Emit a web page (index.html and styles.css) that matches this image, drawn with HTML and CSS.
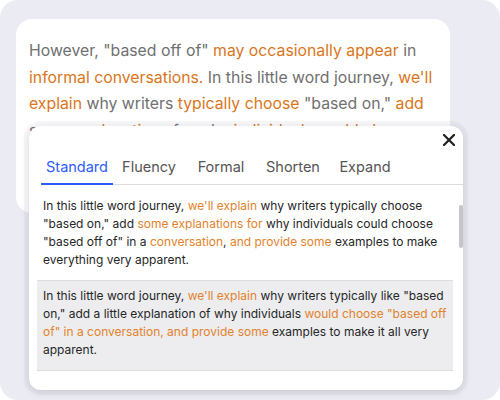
FILE: index.html
```html
<!DOCTYPE html>
<html lang="en">
<head>
    <meta charset="UTF-8">
    <meta name="viewport" content="width=device-width, initial-scale=1.0">
    <title>Rewrite suggestions</title>
    <link rel="stylesheet" href="styles.css">
</head>
<body>
    <div class="frame">
        <div class="editor-card">
            <p class="editor-text">
                However, "based off of" <span class="hl">may occasionally appear</span> in
                <span class="hl">informal conversations.</span> In this little word journey, <span class="hl">we'll
                explain</span> why writers <span class="hl">typically choose</span> "based on," <span class="hl">add</span>
                some <span class="hl">explanations</span> for why <span class="hl">individuals could choose</span>
            </p>
        </div>

        <div class="rewrite-popup">
            <div class="popup-head">
                <button class="close-btn" aria-label="Close">
                    <svg width="12" height="12" viewBox="0 0 12 12">
                        <path d="M1 1 L11 11 M11 1 L1 11" stroke="#1f1f1f" stroke-width="2.2" stroke-linecap="square"/>
                    </svg>
                </button>
            </div>

            <div class="tabs">
                <div class="tab active">Standard</div>
                <div class="tab">Fluency</div>
                <div class="tab">Formal</div>
                <div class="tab">Shorten</div>
                <div class="tab">Expand</div>
            </div>

            <div class="options">
                <div class="option">
                    In this little word journey, <span class="hl">we'll explain</span> why writers typically choose
                    "based on," add <span class="hl">some explanations for</span> why individuals could choose
                    "based off of" in a <span class="hl">conversation</span>, <span class="hl">and provide some</span> examples to make
                    everything very apparent.
                </div>
                <div class="option selected">
                    In this little word journey, <span class="hl">we'll explain</span> why writers typically like "based
                    on," add a little explanation of why individuals <span class="hl">would choose "based off
                    of" in a conversation, and provide some</span> examples to make it all very
                    apparent.
                </div>
            </div>

            <!-- scroll thumb of the options list -->
            <div class="scroll-thumb"></div>
        </div>
    </div>
</body>
</html>
```

FILE: styles.css
```css
body {
    margin: 0;
    background: #ffffff;
    font-family: 'Inter', 'Noto Sans', sans-serif;
}

.frame {
    position: relative;
    width: 500px;
    height: 400px;
    background: #ebebf3;
    border-radius: 18px;
    padding: 19px 0 0 16px;
    box-sizing: border-box;
}

.editor-card {
    width: 434px;
    height: 194px;
    background: #ffffff;
    border-radius: 16px;
    padding: 19px 12px 0 13px;
    box-sizing: border-box;
    overflow: hidden;
}

.editor-text {
    margin: 0;
    font-size: 15.8px;
    line-height: 26.5px;
    color: #707070;
}

.editor-text .hl {
    color: #d9761c;
}

.rewrite-popup {
    position: absolute;
    left: 29px;
    top: 126px;
    width: 434px;
    height: 264px;
    background: #ffffff;
    border-radius: 12px;
    box-shadow: 0 0 0 5px rgba(120, 120, 150, 0.05), 0 2px 10px rgba(0, 0, 0, 0.12);
}

.popup-head {
    display: flex;
    justify-content: flex-end;
    height: 24px;
    padding: 8px 8px 0 0;
    box-sizing: border-box;
}

.close-btn {
    border: none;
    background: none;
    padding: 0;
    width: 12px;
    height: 12px;
    cursor: pointer;
    display: flex;
}

.tabs {
    display: flex;
    margin-left: 12px;
    border-bottom: 1px solid #dcdcdf;
}

.tab {
    width: 72px;
    height: 33px;
    display: flex;
    align-items: center;
    justify-content: center;
    font-size: 14.5px;
    color: #555555;
    margin-bottom: -1px;
    border-bottom: 2px solid transparent;
}

.tab.active {
    color: #2c5cff;
    border-bottom-color: #2c5cff;
}

.options {
    padding: 6px 10px 0 8px;
}

.option {
    padding: 6px 4px 11px 6px;
    font-size: 12px;
    line-height: 18px;
    color: #262626;
    border-bottom: 1px solid #dcdcdf;
}

.option .hl {
    color: #e2822a;
}

.option.selected {
    background: #ededf0;
}

.scroll-thumb {
    position: absolute;
    right: 0;
    top: 79px;
    width: 4px;
    height: 43px;
    border-radius: 2px;
    background: #c6c6c8;
}
```
